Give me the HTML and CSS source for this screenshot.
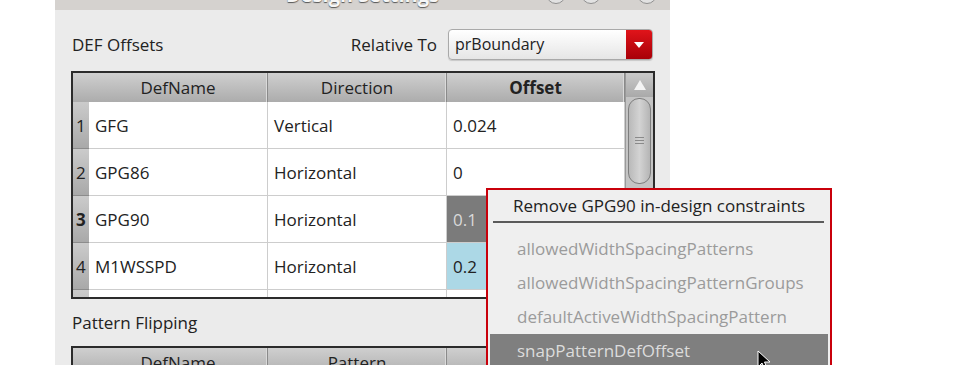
FILE: index.html
```
<!DOCTYPE html>
<html lang="en">
<head>
    <meta charset="UTF-8">
    <title>Design Settings</title>
    <link rel="stylesheet" href="styles.css">
</head>
<body>
    <div class="dialog">
        <div class="titlebar">
            <span></span>
            <span class="title">Design Settings</span>
            <div class="winbtns">
                <span class="wb"></span>
                <span class="wb"></span>
                <span class="wb wb-close"></span>
            </div>
        </div>

        <div class="content">
            <div class="head">
                <span class="label">DEF Offsets</span>
                <div class="relative">
                    <span>Relative To</span>
                    <div class="combo">
                        <span class="combo-text">prBoundary</span>
                        <span class="combo-btn">
                            <svg width="10" height="6" viewBox="0 0 10 6"><path d="M0 0 L10 0 L5 6 Z" fill="#fff"/></svg>
                        </span>
                    </div>
                </div>
            </div>

            <div class="table">
                <div class="grid">
                    <div class="th corner"></div>
                    <div class="th">DefName</div>
                    <div class="th">Direction</div>
                    <div class="th bold">Offset</div>

                    <div class="rh">1</div>
                    <div class="td">GFG</div>
                    <div class="td">Vertical</div>
                    <div class="td">0.024</div>

                    <div class="rh">2</div>
                    <div class="td">GPG86</div>
                    <div class="td">Horizontal</div>
                    <div class="td">0</div>

                    <div class="rh bold">3</div>
                    <div class="td">GPG90</div>
                    <div class="td">Horizontal</div>
                    <div class="td current">0.1</div>

                    <div class="rh">4</div>
                    <div class="td">M1WSSPD</div>
                    <div class="td">Horizontal</div>
                    <div class="td selected">0.2</div>

                    <div class="rh"></div>
                    <div class="td"></div>
                    <div class="td"></div>
                    <div class="td"></div>
                </div>
                <div class="scrollbar">
                    <div class="sb-up">
                        <svg width="12" height="10" viewBox="0 0 12 10"><path d="M6 0 L12 10 L0 10 Z" fill="#f4f4f4"/></svg>
                    </div>
                    <div class="sb-thumb">
                        <span class="grip"></span>
                    </div>
                </div>
            </div>

            <div class="label label-2">Pattern Flipping</div>

            <div class="table table-2">
                <div class="grid">
                    <div class="th corner"></div>
                    <div class="th">DefName</div>
                    <div class="th">Pattern</div>
                    <div class="th"></div>
                </div>
            </div>
        </div>
    </div>

    <div class="menu">
        <div class="menu-title">Remove GPG90 in-design constraints</div>
        <div class="menu-sep"></div>
        <ul class="menu-items">
            <li>allowedWidthSpacingPatterns</li>
            <li>allowedWidthSpacingPatternGroups</li>
            <li>defaultActiveWidthSpacingPattern</li>
            <li class="hover">snapPatternDefOffset</li>
        </ul>
    </div>

    <svg class="cursor" width="14" height="22" viewBox="0 0 14 22">
        <path d="M1 1 L1 17 L5 13 L8 20 L10.5 19 L7.5 12 L13 12 Z" fill="#000" stroke="#fff" stroke-width="1"/>
    </svg>
</body>
</html>
```

FILE: styles.css
```
* {
    margin: 0;
    padding: 0;
    box-sizing: border-box;
}

body {
    position: relative;
    width: 957px;
    height: 365px;
    overflow: hidden;
    background: #fff;
    font-family: 'Open Sans', 'Noto Sans', sans-serif;
    font-size: 17px;
    color: #222;
}

.dialog {
    margin-left: 55px;
    width: 615px;
    height: 365px;
    background: #ebebeb;
    overflow: hidden;
}

.titlebar {
    height: 10px;
    background: #d5d2cf;
    display: grid;
    grid-template-columns: 1fr auto 1fr;
}

.title {
    margin-top: -15px;
    line-height: 20px;
    font-size: 20px;
    font-weight: bold;
    color: #f6f6f6;
    text-shadow: 0 1px 1px #555;
}

.winbtns {
    justify-self: end;
    display: flex;
    gap: 15px;
    margin-right: 13px;
    margin-top: -16px;
}

.wb {
    width: 20px;
    height: 20px;
    border-radius: 50%;
    border: 1px solid #8f8f8f;
    background: #e2e2e2;
}

.wb-close {
    margin-left: 21px;
}

.content {
    padding: 19px 15px 0 16px;
}

.head {
    display: flex;
    align-items: center;
    justify-content: space-between;
    height: 31px;
}

.label {
    margin-left: 1px;
    line-height: 20px;
}

.relative {
    display: flex;
    align-items: center;
    gap: 11px;
    margin-right: 2px;
}

.combo {
    display: flex;
    width: 205px;
    height: 31px;
    border: 1px solid #a9a9a9;
    border-radius: 4px;
    background: linear-gradient(#ffffff, #e6e6e6);
    box-shadow: 0 1px 1px rgba(0, 0, 0, 0.15);
    overflow: hidden;
}

.combo-text {
    flex: 1;
    padding-left: 6px;
    font-size: 16px;
    line-height: 29px;
}

.combo-btn {
    width: 26px;
    display: flex;
    align-items: center;
    justify-content: center;
    background: linear-gradient(#e0141a, #a80008);
}

/* tables */
.table {
    display: flex;
    margin-top: 11px;
    height: 228px;
    border: 2px solid #2b2b2b;
    background: #fff;
    overflow: hidden;
}

.grid {
    display: grid;
    grid-template-columns: 16px 179px 179px 178px;
    grid-auto-rows: 47px;
    grid-template-rows: 29px;
}

.th {
    display: flex;
    align-items: center;
    justify-content: center;
    background: linear-gradient(#cfcfcf, #acacac);
    border-right: 1px solid #8a8a8a;
    box-shadow: inset -1px 0 0 #dadada;
}

.th.corner {
    border-right: none;
    box-shadow: none;
}

.bold {
    font-weight: bold;
}

.rh {
    display: flex;
    align-items: center;
    padding-left: 3px;
    background: linear-gradient(#cbcbcb, #a9a9a9);
    border-bottom: 1px solid #8c8c8c;
}

.td {
    display: flex;
    align-items: center;
    padding-left: 6px;
    border-right: 1px solid #cdcdcd;
    border-bottom: 1px solid #cdcdcd;
}

.td.current {
    background: #7b7b7b;
    color: #d9d9d9;
}

.td.selected {
    background: #acd8e6;
}

.scrollbar {
    width: 28px;
    background: #c4c4c4;
    border-left: 1px solid #9a9a9a;
}

.sb-up {
    height: 24px;
    display: flex;
    justify-content: center;
    align-items: center;
    background: linear-gradient(#c9c9c9, #a9a9a9);
}

.sb-thumb {
    margin: 1px 2px 0 2px;
    height: 86px;
    border: 1px solid #7e7e7e;
    border-radius: 11px;
    background: linear-gradient(90deg, #b9b9b9, #d3d3d3 50%, #b5b5b5);
    display: flex;
    justify-content: center;
    align-items: center;
}

.grip {
    width: 9px;
    height: 9px;
    background: repeating-linear-gradient(#8a8a8a 0 1px, transparent 1px 3px);
}

.label-2 {
    margin-top: 14px;
}

.table-2 {
    margin-top: 13px;
    height: 19px;
    border-bottom: none;
}

/* context menu, over the dialog */
.menu {
    position: absolute;
    left: 486px;
    top: 188px;
    width: 346px;
    height: 177px;
    border: 2px solid #c9000b;
    border-bottom: none;
    background: #efefef;
    overflow: hidden;
}

.menu-title {
    height: 31px;
    line-height: 32px;
    text-align: center;
    color: #222;
}

.menu-sep {
    height: 2px;
    margin: 0 6px 0 5px;
    background: #5a5a5a;
}

.menu-items {
    list-style: none;
    padding-top: 9px;
}

.menu-items li {
    height: 34px;
    line-height: 34px;
    padding-left: 29px;
    color: #9b9b9b;
}

.menu-items li.hover {
    margin: 0 2px;
    padding-left: 27px;
    background: #7f7f7f;
    color: #dcdcdc;
}

.cursor {
    position: absolute;
    left: 757px;
    top: 350px;
}
```
